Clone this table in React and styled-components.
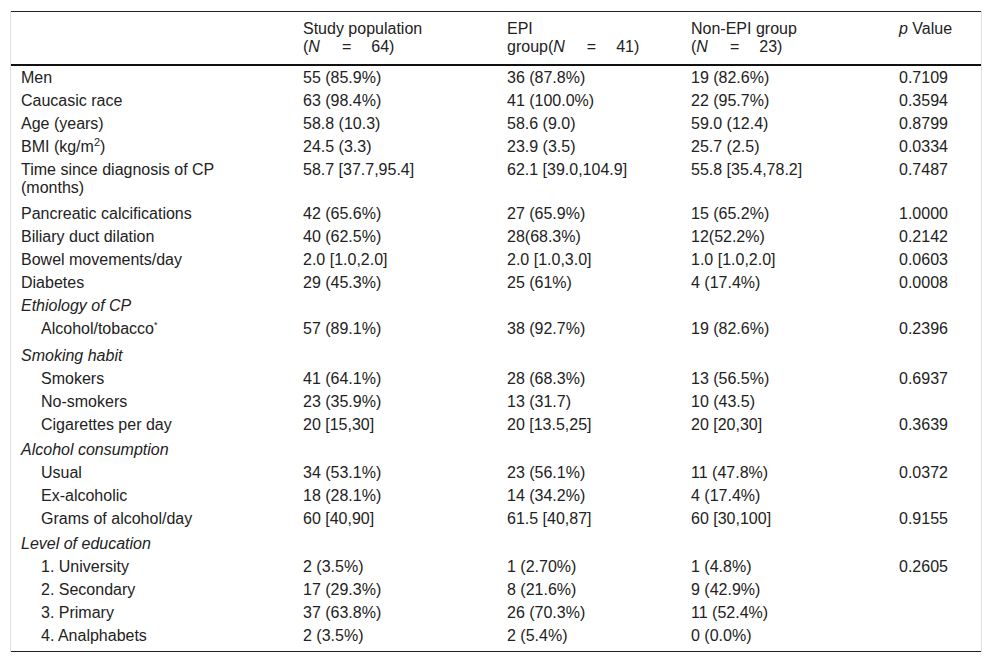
import React from "react";
import styled, { createGlobalStyle } from "styled-components";

const Global = createGlobalStyle`
  html, body { margin: 0; padding: 0; background: #fff; }
  body { font-family: "Liberation Sans", Arial, sans-serif; color: #222; }
`;

const Page = styled.div`
  padding: 11px 10px 0 10px;
`;

const Frame = styled.div`
  box-sizing: border-box;
  width: 972px;
  border-left: 1px solid #e0e0e0;
  border-right: 1px solid #e0e0e0;
`;

const Table = styled.table`
  width: 100%;
  border-collapse: collapse;
  font-size: 16px;
  line-height: 18px;
  border-top: 1px solid #222;
  border-bottom: 1px solid #222;
  table-layout: fixed;
`;

const Col = styled.col`
  width: ${(p) => (p.$w ? `${p.$w}px` : "auto")};
`;

const Head = styled.thead`
  border-bottom: 2px solid #111;
`;

const Th = styled.th`
  text-align: left;
  font-weight: normal;
  vertical-align: top;
  padding: 8px 10px 8px 10px;
`;

const Td = styled.td`
  vertical-align: top;
  padding: 3px ${(p) => (p.$label ? 24 : 10)}px ${(p) => 2 + (p.$extra || 0)}px
    ${(p) => (p.$indent ? 30 : 10)}px;
  font-style: ${(p) => (p.$section ? "italic" : "normal")};
`;

const Eq = styled.span`
  display: inline-block;
  margin: 0 20px 0 22px;
`;

const Sup = styled.sup`
  font-size: ${(p) => (p.$small ? "9px" : "11px")};
  line-height: 0;
`;

const I = styled.i``;

const NCount = ({ pre, n }) => (
  <>
    {pre}(<I>N</I>
    <Eq>=</Eq>
    {n})
  </>
);

const rows = [
  { l: "Men", v: ["55 (85.9%)", "36 (87.8%)", "19 (82.6%)", "0.7109"] },
  { l: "Caucasic race", v: ["63 (98.4%)", "41 (100.0%)", "22 (95.7%)", "0.3594"] },
  { l: "Age (years)", v: ["58.8 (10.3)", "58.6 (9.0)", "59.0 (12.4)", "0.8799"] },
  { l: <>BMI (kg/m<Sup>2</Sup>)</>, v: ["24.5 (3.3)", "23.9 (3.5)", "25.7 (2.5)", "0.0334"] },
  { l: "Time since diagnosis of CP (months)", x: 3, v: ["58.7 [37.7,95.4]", "62.1 [39.0,104.9]", "55.8 [35.4,78.2]", "0.7487"] },
  { l: "Pancreatic calcifications", v: ["42 (65.6%)", "27 (65.9%)", "15 (65.2%)", "1.0000"] },
  { l: "Biliary duct dilation", v: ["40 (62.5%)", "28(68.3%)", "12(52.2%)", "0.2142"] },
  { l: "Bowel movements/day", v: ["2.0 [1.0,2.0]", "2.0 [1.0,3.0]", "1.0 [1.0,2.0]", "0.0603"] },
  { l: "Diabetes", v: ["29 (45.3%)", "25 (61%)", "4 (17.4%)", "0.0008"] },
  { s: "Ethiology of CP" },
  { l: <>Alcohol/tobacco<Sup $small>*</Sup></>, i: true, x: 4, v: ["57 (89.1%)", "38 (92.7%)", "19 (82.6%)", "0.2396"] },
  { s: "Smoking habit" },
  { l: "Smokers", i: true, v: ["41 (64.1%)", "28 (68.3%)", "13 (56.5%)", "0.6937"] },
  { l: "No-smokers", i: true, v: ["23 (35.9%)", "13 (31.7)", "10 (43.5)", ""] },
  { l: "Cigarettes per day", i: true, x: 2, v: ["20 [15,30]", "20 [13.5,25]", "20 [20,30]", "0.3639"] },
  { s: "Alcohol consumption" },
  { l: "Usual", i: true, v: ["34 (53.1%)", "23 (56.1%)", "11 (47.8%)", "0.0372"] },
  { l: "Ex-alcoholic", i: true, v: ["18 (28.1%)", "14 (34.2%)", "4 (17.4%)", ""] },
  { l: "Grams of alcohol/day", i: true, x: 2, v: ["60 [40,90]", "61.5 [40,87]", "60 [30,100]", "0.9155"] },
  { s: "Level of education" },
  { l: "1. University", i: true, v: ["2 (3.5%)", "1 (2.70%)", "1 (4.8%)", "0.2605"] },
  { l: "2. Secondary", i: true, v: ["17 (29.3%)", "8 (21.6%)", "9 (42.9%)", ""] },
  { l: "3. Primary", i: true, v: ["37 (63.8%)", "26 (70.3%)", "11 (52.4%)", ""] },
  { l: "4. Analphabets", i: true, x: 4, v: ["2 (3.5%)", "2 (5.4%)", "0 (0.0%)", ""] },
];

export default function App() {
  return (
    <>
      <Global />
      <Page>
        <Frame>
          <Table>
            <colgroup>
              <Col $w={282} />
              <Col $w={204} />
              <Col $w={184} />
              <Col $w={208} />
              <Col />
            </colgroup>
            <Head>
              <tr>
                <Th></Th>
                <Th>
                  Study population
                  <br />
                  <NCount n="64" />
                </Th>
                <Th>
                  EPI
                  <br />
                  <NCount pre="group" n="41" />
                </Th>
                <Th>
                  Non-EPI group
                  <br />
                  <NCount n="23" />
                </Th>
                <Th>
                  <I>p</I> Value
                </Th>
              </tr>
            </Head>
            <tbody>
              {rows.map((r, k) =>
                r.s ? (
                  <tr key={k}>
                    <Td $section colSpan={5}>{r.s}</Td>
                  </tr>
                ) : (
                  <tr key={k}>
                    <Td $label $indent={r.i} $extra={r.x}>{r.l}</Td>
                    {r.v.map((v, j) => (
                      <Td key={j} $extra={r.x}>{v}</Td>
                    ))}
                  </tr>
                )
              )}
            </tbody>
          </Table>
        </Frame>
      </Page>
    </>
  );
}
